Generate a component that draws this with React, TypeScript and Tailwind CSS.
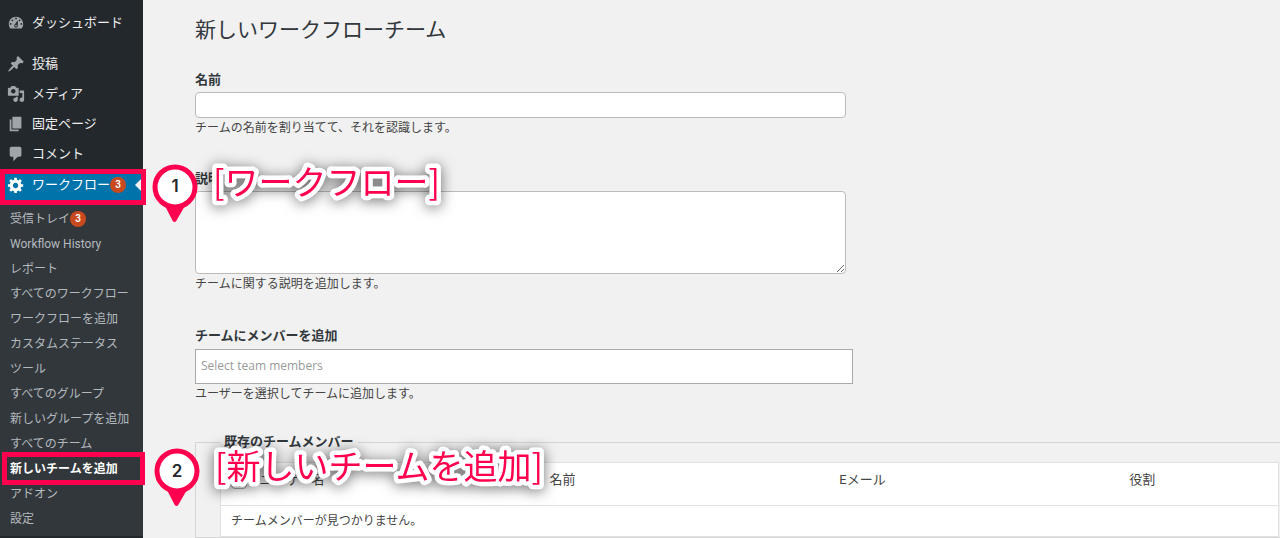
import { useState } from 'react'
import clsx from 'clsx'

const icons = {
  dashboard:
    'M3.76 16h12.48c1.1-1.37 1.76-3.11 1.76-5 0-4.42-3.58-8-8-8s-8 3.58-8 8c0 1.89.66 3.63 1.76 5zM10 4c.55 0 1 .45 1 1s-.45 1-1 1-1-.45-1-1 .45-1 1-1zM6 6c.55 0 1 .45 1 1s-.45 1-1 1-1-.45-1-1 .45-1 1-1zm8 0c.55 0 1 .45 1 1s-.45 1-1 1-1-.45-1-1 .45-1 1-1zm-5.37 5.55L12 7v6c0 1.1-.9 2-2 2s-2-.9-2-2c0-.57.24-1.08.63-1.45zM4 10c.55 0 1 .45 1 1s-.45 1-1 1-1-.45-1-1 .45-1 1-1zm12 0c.55 0 1 .45 1 1s-.45 1-1 1-1-.45-1-1 .45-1 1-1zm-5 3c0-.55-.45-1-1-1s-1 .45-1 1 .45 1 1 1 1-.45 1-1z',
  post: 'M10.44 3.02l1.82-1.82 6.36 6.35-1.83 1.82c-1.05-.68-2.48-.57-3.41.36l-.75.75c-.92.93-1.04 2.35-.35 3.41l-1.83 1.82-2.41-2.41-2.8 2.79c-.42.42-3.38 2.71-3.8 2.29s1.86-3.39 2.28-3.81l2.79-2.79L4.1 9.36l1.83-1.82c1.05.69 2.48.57 3.4-.36l.75-.75c.93-.92 1.05-2.35.36-3.41z',
  media:
    'M13 11V4c0-.55-.45-1-1-1h-1.67L9 1H5L3.67 3H2c-.55 0-1 .45-1 1v7c0 .55.45 1 1 1h10c.55 0 1-.45 1-1zM7 4.5c1.38 0 2.5 1.12 2.5 2.5S8.38 9.5 7 9.5 4.5 8.38 4.5 7 5.62 4.5 7 4.5zM14 6h5v10.5c0 1.38-1.12 2.5-2.5 2.5S14 17.88 14 16.5s1.12-2.5 2.5-2.5c.17 0 .34.02.5.05V9h-3V6zm-4 8.05V13h2v3.5c0 1.38-1.12 2.5-2.5 2.5S7 17.88 7 16.5 8.12 14 9.5 14c.17 0 .34.02.5.05z',
  page: 'M6 15V2h10v13H6zm-1 1h8v2H3V5h2v11z',
  comment: 'M5 2h9c1.1 0 2 .9 2 2v7c0 1.1-.9 2-2 2h-2l-5 5v-5H5c-1.1 0-2-.9-2-2V4c0-1.1.9-2 2-2z',
  gear: 'M18 12h-2.18c-.17.7-.44 1.35-.81 1.93l1.54 1.54-2.1 2.1-1.54-1.54c-.58.36-1.23.63-1.91.79V19H8v-2.18c-.68-.16-1.33-.43-1.91-.79l-1.54 1.54-2.12-2.12 1.54-1.54c-.36-.58-.63-1.23-.79-1.91H1V9.03h2.17c.16-.7.44-1.35.8-1.94L2.43 5.55l2.1-2.1 1.54 1.54c.58-.37 1.24-.64 1.93-.81V2h3v2.18c.68.16 1.33.43 1.91.79l1.54-1.54 2.12 2.12-1.54 1.54c.36.59.64 1.24.8 1.94H18V12zm-8.5 1.5c1.66 0 3-1.34 3-3s-1.34-3-3-3-3 1.34-3 3 1.34 3 3 3z',
}

const menu: { icon: keyof typeof icons; label: string }[] = [
  { icon: 'post', label: '投稿' },
  { icon: 'media', label: 'メディア' },
  { icon: 'page', label: '固定ページ' },
  { icon: 'comment', label: 'コメント' },
]

const submenu: { label: string; count?: number; current?: boolean }[] = [
  { label: '受信トレイ', count: 3 },
  { label: 'Workflow History' },
  { label: 'レポート' },
  { label: 'すべてのワークフロー' },
  { label: 'ワークフローを追加' },
  { label: 'カスタムステータス' },
  { label: 'ツール' },
  { label: 'すべてのグループ' },
  { label: '新しいグループを追加' },
  { label: 'すべてのチーム' },
  { label: '新しいチームを追加', current: true },
  { label: 'アドオン' },
  { label: '設定' },
]

function Icon({ name }: { name: keyof typeof icons }) {
  return (
    <svg viewBox="0 0 20 20" className="w-[18px] h-[18px] flex-shrink-0" fill="currentColor" aria-hidden="true">
      <path d={icons[name]} />
    </svg>
  )
}

function Count({ value }: { value: number }) {
  return (
    <span className="flex items-center justify-center w-4 h-4 rounded-full bg-[#ca4a1f] text-white text-[10px] leading-4 font-semibold">
      {value}
    </span>
  )
}

// numbered pin with its caption, drawn over the page
function Callout({ step, text }: { step: number; text: string }) {
  return (
    <div className="flex items-start gap-[15px] pointer-events-none">
      <div className="relative w-[46px] h-[59px] flex-shrink-0">
        <svg viewBox="0 0 46 59" className="w-full h-full" aria-hidden="true">
          <path d="M12 40 L20.5 56.5 Q22.5 59.5 24.5 56.5 L34 40 Z" fill="#ff004f" />
          <circle cx="23" cy="23" r="20" fill="#fff" stroke="#ff004f" strokeWidth="5" />
        </svg>
        <span className="absolute inset-x-0 top-0 h-[46px] flex items-center justify-center font-[Inter,sans-serif] text-[17px] font-semibold text-[#23282d]">
          {step}
        </span>
      </div>
      {/* svg text, since the outline needs round joins */}
      <svg className="w-[340px] h-10 overflow-visible font-['Noto_Sans_CJK_JP',sans-serif] [filter:drop-shadow(0_2px_7px_rgba(0,0,0,0.55))]">
        <text
          x="0"
          y="31"
          fill="#ff004f"
          stroke="#fff"
          strokeWidth="9"
          strokeLinejoin="round"
          paintOrder="stroke"
          className="text-[34px]"
        >
          {text}
        </text>
      </svg>
    </div>
  )
}

function Sidebar() {
  return (
    <nav className="w-[143px] flex-shrink-0 bg-[#23282d] pt-2 text-[13px] text-[#eee]">
      <a href="#dashboard" className="flex items-center h-[30px] pl-[7px] gap-[7px] mb-[11px]">
        <span className="text-[#a0a5aa]"><Icon name="dashboard" /></span>
        ダッシュボード
      </a>
      {menu.map((item) => (
        <a key={item.label} href={`#${item.icon}`} className="flex items-center h-[30px] pl-[7px] gap-[7px]">
          <span className="text-[#a0a5aa]"><Icon name={item.icon} /></span>
          {item.label}
        </a>
      ))}

      <div className="relative">
        <a href="#workflow" className="relative flex items-center h-8 pl-[7px] gap-[7px] bg-[#0073aa] text-white overflow-hidden">
          <Icon name="gear" />
          <span className="flex items-center">
            ワークフロー
            <Count value={3} />
          </span>
          <span className="absolute right-0 top-2 border-8 border-transparent border-r-[#f1f1f1]" />
        </a>
        <div className="absolute z-10 left-0 top-0 -right-[3px] h-9 border-[5px] border-[#ff004f] pointer-events-none" />
        <div className="absolute z-20 left-[152px] -top-[5px]">
          <Callout step={1} text="[ワークフロー]" />
        </div>
      </div>

      <ul className="bg-[#32373c] py-[5px] text-xs text-[#b4b9be]">
        {submenu.map((item) => (
          <li key={item.label} className="relative">
            <a href="#sub" className={clsx('flex items-center h-[25px] pl-[10px]', item.current && 'font-bold text-white')}>
              {item.label}
              {item.count && <Count value={item.count} />}
            </a>
            {item.current && (
              <>
                <div className="absolute z-10 left-[2px] -right-[2px] -inset-y-1 border-[5px] border-[#ff004f] pointer-events-none" />
                <div className="absolute z-20 left-[154px] -top-2">
                  <Callout step={2} text="[新しいチームを追加]" />
                </div>
              </>
            )}
          </li>
        ))}
      </ul>
    </nav>
  )
}

export default function App() {
  const [name, setName] = useState('')
  const [description, setDescription] = useState('')

  return (
    <div className="flex h-screen overflow-hidden bg-[#f1f1f1] text-[#444] font-[Roboto,'Noto_Sans_CJK_JP',sans-serif]">
      <Sidebar />
      <main className="flex-1 min-w-0 pl-[52px] pt-4">
        <h1 className="text-[21px] leading-7 text-[#32373c]">新しいワークフローチーム</h1>

        <form className="mt-[26px]">
          <div className="mb-[31px]">
            <label htmlFor="team-name" className="block text-[13px] leading-5 font-semibold text-[#32373c]">名前</label>
            <input
              id="team-name"
              value={name}
              onChange={(e) => setName(e.target.value)}
              className="block mt-[2px] w-full max-w-[651px] h-[26px] px-2 text-[13px] bg-white border border-[#bbb] rounded"
            />
            <p className="text-xs leading-5">チームの名前を割り当てて、それを認識します。</p>
          </div>

          <div className="mb-8">
            <label htmlFor="team-desc" className="block text-[13px] leading-5 font-semibold text-[#32373c]">説明</label>
            <textarea
              id="team-desc"
              value={description}
              onChange={(e) => setDescription(e.target.value)}
              className="block mt-[2px] w-full max-w-[651px] h-[83px] px-2 text-[13px] bg-white border border-[#bbb] rounded resize"
            />
            <p className="text-xs leading-5">チームに関する説明を追加します。</p>
          </div>

          <div className="mb-7">
            <label htmlFor="team-members" className="block text-[13px] leading-5 font-semibold text-[#32373c]">チームにメンバーを追加</label>
            <input
              id="team-members"
              placeholder="Select team members"
              className="block mt-[3px] w-full max-w-[658px] h-[35px] px-[5px] pb-[2px] font-['Open_Sans',sans-serif] text-xs bg-white border border-[#aaa] placeholder:text-[#999]"
            />
            <p className="text-xs leading-5">ユーザーを選択してチームに追加します。</p>
          </div>

          <fieldset className="border border-r-0 border-[#d5d5d5] pl-6 pt-[10px] pr-px">
            <legend className="px-1 text-[13px] leading-5 font-semibold text-[#32373c]">既存のチームメンバー</legend>
            <table className="w-full table-fixed border border-[#e1e1e1] bg-white text-left text-[13px]">
              <thead>
                <tr className="h-[43px] border-b border-[#e1e1e1] align-top leading-5">
                  <th className="w-[29px] pl-[10px] pt-[10px]">
                    <input type="checkbox" aria-label="すべて選択" className="block w-4 h-4 appearance-none bg-white border border-[#aaa] rounded" />
                  </th>
                  <th className="w-[27.4%] pl-[10px] pt-[7px] font-normal">ユーザー名</th>
                  <th className="w-[27.4%] pl-[10px] pt-[7px] font-normal">名前</th>
                  <th className="w-[27.4%] pl-[10px] pt-[7px] font-normal">Eメール</th>
                  <th className="pl-[10px] pt-[7px] font-normal">役割</th>
                </tr>
              </thead>
              <tbody>
                <tr className="h-[31px]">
                  <td colSpan={5} className="pl-[10px] text-xs">チームメンバーが見つかりません。</td>
                </tr>
              </tbody>
            </table>
          </fieldset>
        </form>
      </main>
    </div>
  )
}
